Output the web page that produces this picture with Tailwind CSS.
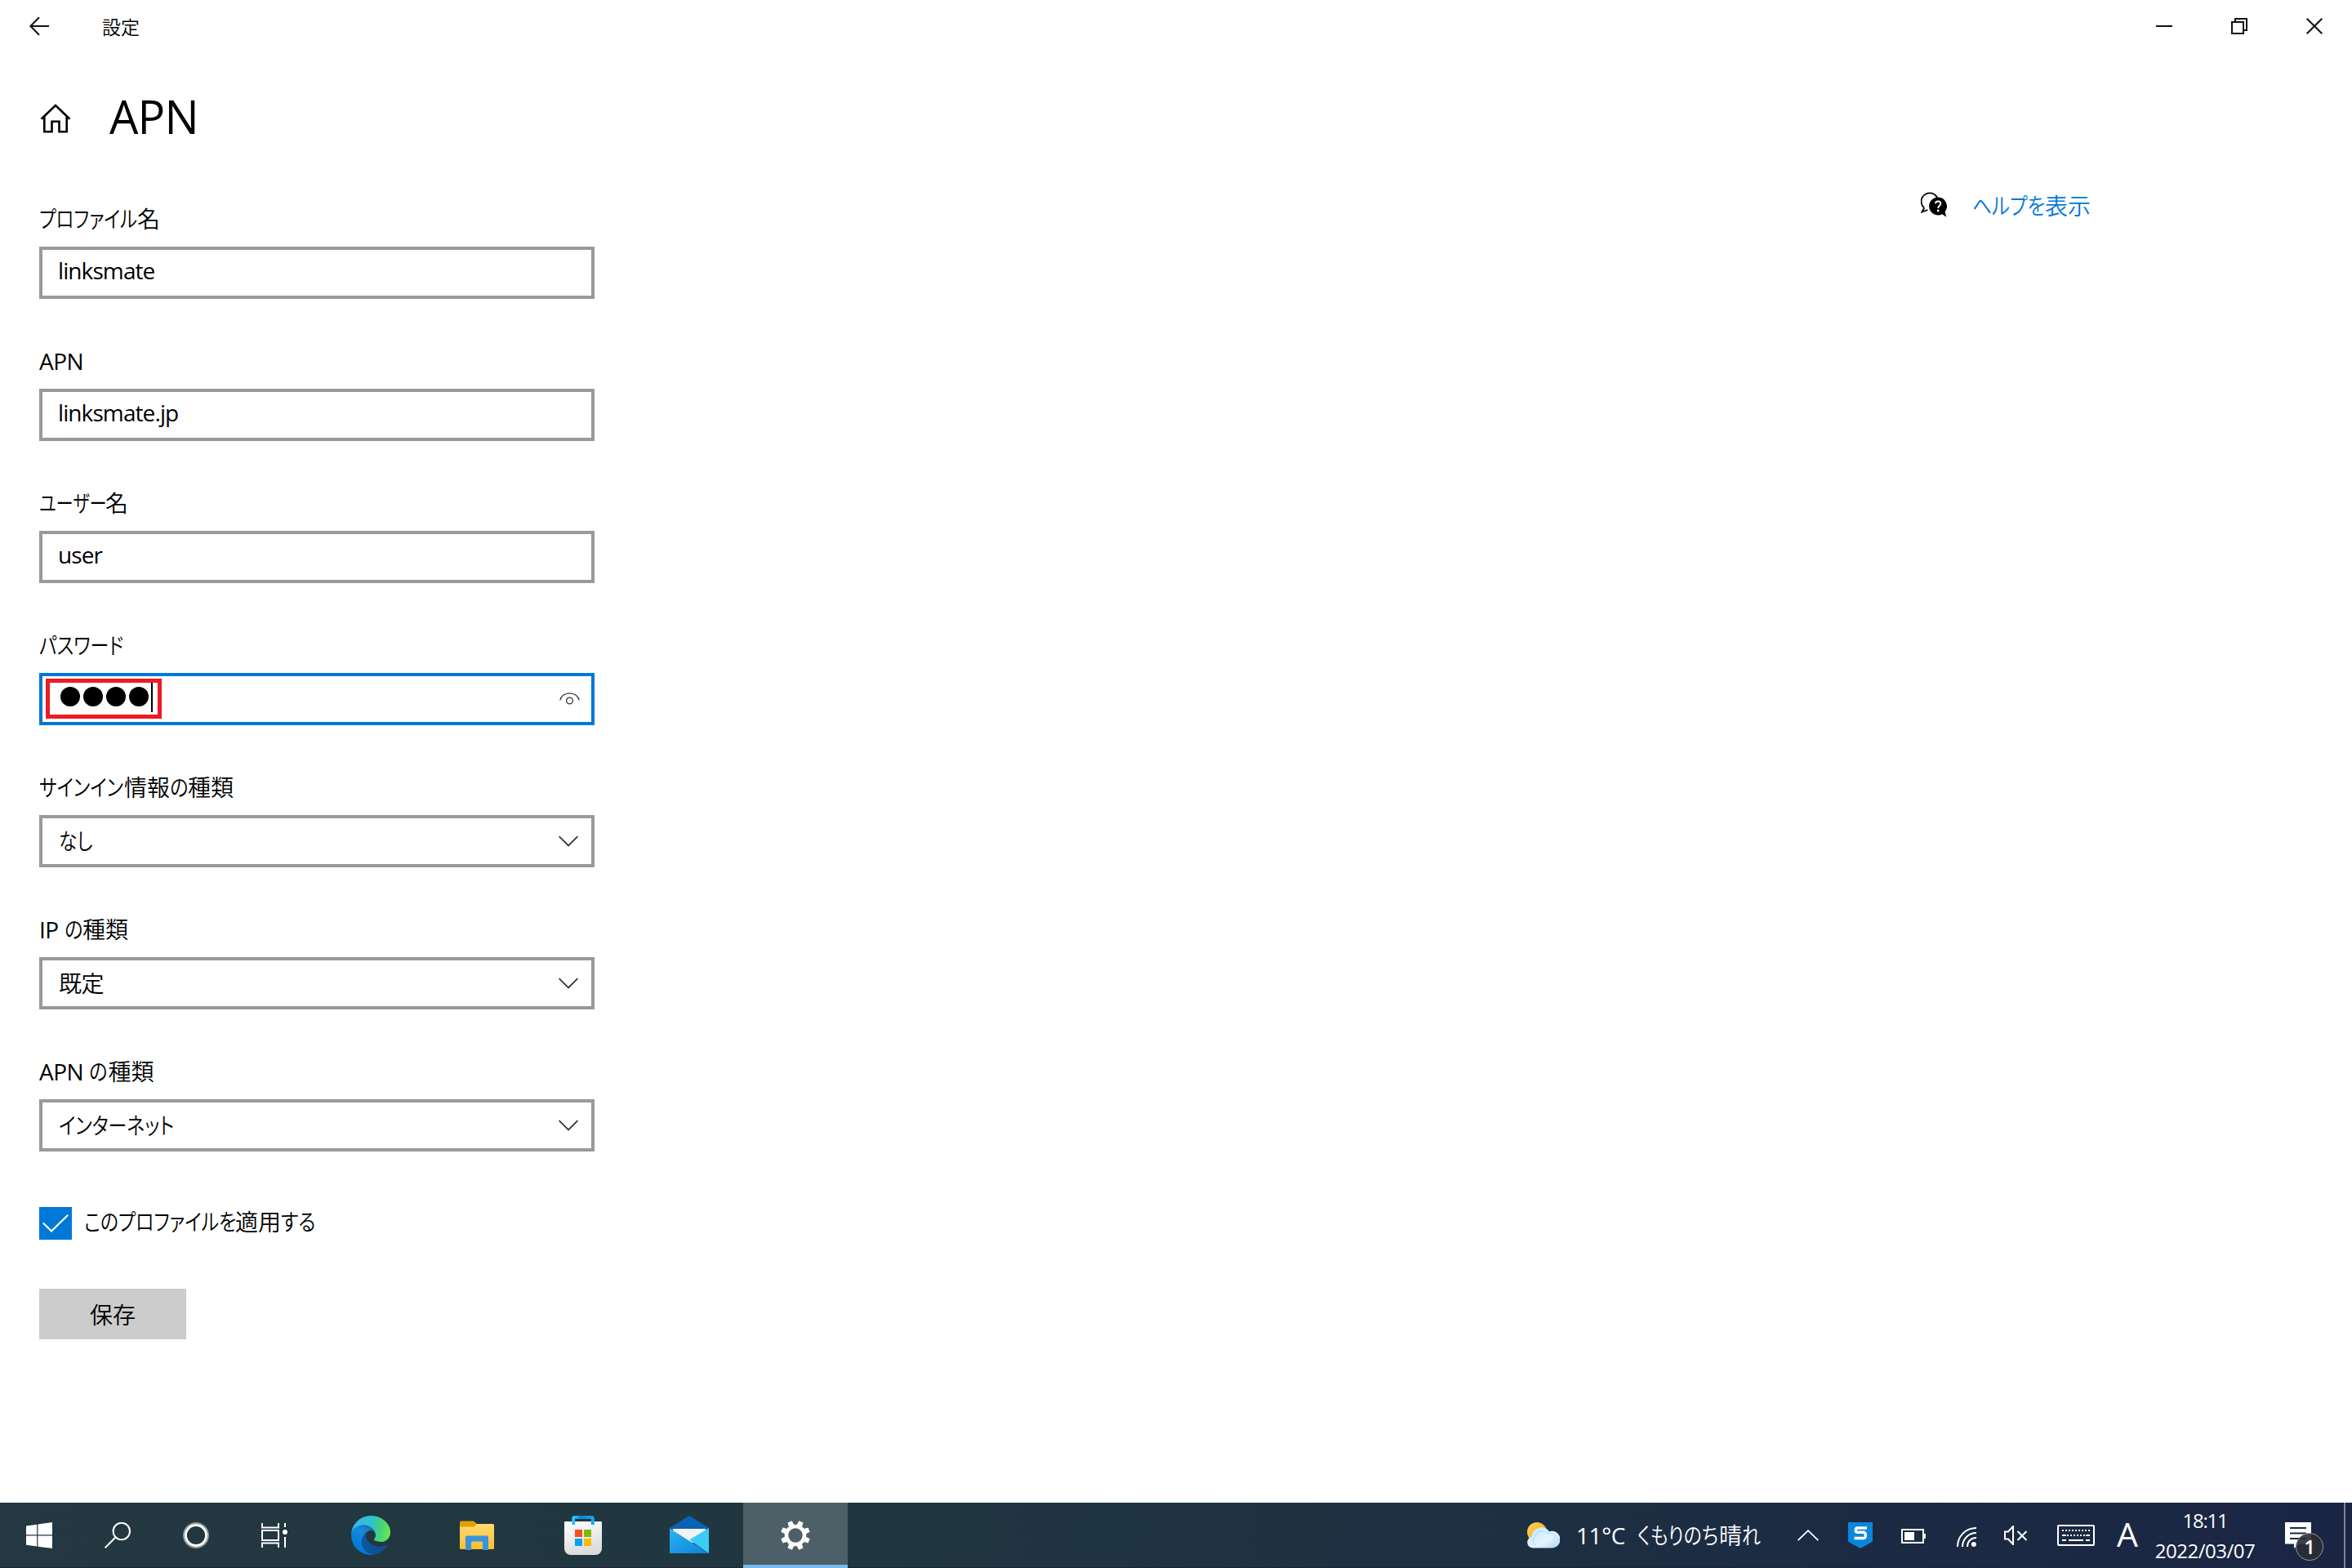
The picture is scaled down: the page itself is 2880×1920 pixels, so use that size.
<!DOCTYPE html>
<html lang="ja">
<head>
  <meta charset="UTF-8" />
  <meta name="viewport" content="width=device-width, initial-scale=1.0" />
  <title>設定</title>
  <script src="https://cdn.jsdelivr.net/npm/@tailwindcss/browser@4"></script>
</head>
<body class="w-[2880px] h-[1920px] overflow-hidden flex flex-col bg-white text-black font-['Open_Sans','Noto_Sans_CJK_JP',sans-serif] text-[28px] leading-[40px] whitespace-nowrap">

<!-- Title bar -->
<header class="h-16 flex items-center shrink-0">
  <button class="w-24 h-16 flex items-center justify-center">
    <svg class="w-6 h-6" viewBox="0 0 24 24" fill="none" stroke="#111" stroke-width="2"><path d="M24 12H1.5M12 1.2 1.4 12 12 22.8"/></svg>
  </button>
  <span class="ml-[29px] mt-0.5 text-[23px] font-[350]">設定</span>
  <div class="ml-auto flex">
    <button class="w-[92px] h-16 flex items-center justify-center">
      <svg class="w-5 h-5" viewBox="0 0 20 20"><path d="M0 9h20v2H0z" fill="#111"/></svg>
    </button>
    <button class="w-[92px] h-16 flex items-center justify-center">
      <svg class="w-5 h-5" viewBox="0 0 20 20" fill="none" stroke="#111" stroke-width="2"><path d="M1 5h14v14H1zM5 5V1h14v14h-4"/></svg>
    </button>
    <button class="w-[92px] h-16 flex items-center justify-center">
      <svg class="w-5 h-5" viewBox="0 0 20 20" fill="none" stroke="#111" stroke-width="2"><path d="m.7.7 18.6 18.6M19.300.7.7 19.3"/></svg>
    </button>
  </div>
</header>

<main class="flex-1 flex">
  <div class="w-[2352px] pl-12">
    <div class="h-[184px] flex items-start pt-[43px]">
      <svg class="w-10 h-9 mt-5" viewBox="0 0 40 36" fill="none" stroke="#000" stroke-width="2.6"><path d="M2.600 18.800 20 2l17.400 16.800M6.300 16v18.300h9.200V21.700h9v12.600h9.200V16"/></svg>
      <h1 class="ml-[46px] text-[56px] leading-[70px] font-[380] tracking-[-0.8px]">APN</h1>
    </div>

    <form class="w-[680px]">
      <div class="mb-14">
        <label class="block h-10 mb-[14px] font-[350]"><span class="inline-block w-[120px] origin-left scale-x-80 [font-feature-settings:'palt']">プロファイル</span>名</label>
        <div class="h-16 border-4 border-[#999] px-[19px] pt-[5px] tracking-[-0.9px]">linksmate</div>
      </div>
      <div class="mb-14">
        <label class="block h-10 mb-[14px] tracking-[-0.5px]">APN</label>
        <div class="h-16 border-4 border-[#999] px-[19px] pt-[5px] tracking-[-0.9px]">linksmate.jp</div>
      </div>
      <div class="mb-14">
        <label class="block h-10 mb-[14px] font-[350]"><span class="inline-block w-[81px] origin-left scale-x-76 [font-feature-settings:'palt']">ユーザー</span>名</label>
        <div class="h-16 border-4 border-[#999] px-[19px] pt-[5px] tracking-[-0.9px]">user</div>
      </div>
      <div class="mb-14">
        <label class="block h-10 mb-[14px] font-[350]"><span class="inline-block w-[101px] origin-left scale-x-82 [font-feature-settings:'palt']">パスワード</span></label>
        <div class="relative h-16 border-4 border-[#0078d7] flex items-start justify-between pl-[22px] pr-[14px] pt-2">
          <div class="flex items-center gap-1 h-9">
            <span class="w-6 h-6 rounded-full bg-black -mt-0.5"></span>
            <span class="w-6 h-6 rounded-full bg-black -mt-0.5"></span>
            <span class="w-6 h-6 rounded-full bg-black -mt-0.5"></span>
            <span class="w-6 h-6 rounded-full bg-black -mt-0.5"></span>
            <span class="w-0.5 h-9 bg-black -ml-px"></span>
          </div>
          <svg class="w-[25px] h-4 mt-[11px]" viewBox="0 0 25 16" fill="none" stroke="#333" stroke-width="1.3"><path d="M.8 10.500A11.800 10 0 0 1 24.200 10.500"/><circle cx="12.5" cy="11" r="3.9"/></svg>
          <!-- highlight frame -->
          <div class="absolute left-1 top-[3px] w-[142px] h-[49px] border-5 border-[#ed1c24]"></div>
        </div>
      </div>
      <div class="mb-14">
        <label class="block h-10 mb-[14px] font-[350]"><span class="inline-block w-[104px] origin-left scale-x-[.82] [font-feature-settings:'palt']">サインイン</span>情報<span class="inline-block w-[22px] origin-left scale-x-[.83] [font-feature-settings:'palt']">の</span>種類</label>
        <div class="h-16 border-4 border-[#999] pl-5 pr-4 flex items-center justify-between font-[350]">
          <span class="inline-block w-[42px] origin-left scale-x-[.81] [font-feature-settings:'palt']">なし</span>
          <svg class="w-6 h-3.5" viewBox="0 0 24 14" fill="none" stroke="#333" stroke-width="1.8"><path d="m.6 1.200 11.400 11.300L23.400 1.200"/></svg>
        </div>
      </div>
      <div class="mb-14">
        <label class="block h-10 mb-[14px] font-[350]"><span class="font-normal tracking-[-0.5px]">IP</span> <span class="inline-block w-[22px] origin-left scale-x-[.83] [font-feature-settings:'palt']">の</span>種類</label>
        <div class="h-16 border-4 border-[#999] pl-5 pr-4 flex items-center justify-between font-[350]">
          <span class="tracking-[-0.5px]">既定</span>
          <svg class="w-6 h-3.5" viewBox="0 0 24 14" fill="none" stroke="#333" stroke-width="1.8"><path d="m.6 1.200 11.400 11.300L23.400 1.200"/></svg>
        </div>
      </div>
      <div class="mb-14">
        <label class="block h-10 mb-[14px] font-[350]"><span class="font-normal tracking-[-0.5px]">APN</span> <span class="inline-block w-[23px] origin-left scale-x-[.83] [font-feature-settings:'palt']">の</span>種類</label>
        <div class="h-16 border-4 border-[#999] pl-5 pr-4 flex items-center justify-between font-[350]">
          <span class="inline-block w-[140px] origin-left scale-x-[.82] [font-feature-settings:'palt']">インターネット</span>
          <svg class="w-6 h-3.5" viewBox="0 0 24 14" fill="none" stroke="#333" stroke-width="1.8"><path d="m.6 1.200 11.400 11.300L23.400 1.200"/></svg>
        </div>
      </div>
      <div class="mt-[68px] h-10 flex items-center">
        <span class="w-10 h-10 bg-[#0078d7] flex items-center justify-center">
          <svg class="w-8 h-[22px]" viewBox="0 0 32 22" fill="none" stroke="#fff" stroke-width="2.2"><path d="M.8 10.500 11 20.500 31.200.8"/></svg>
        </span>
        <span class="ml-[15px] -mt-1 font-[350]"><span class="inline-block w-[185px] origin-left scale-x-[.82] [font-feature-settings:'palt']">このプロファイルを</span>適用<span class="inline-block w-[43px] origin-left scale-x-[.84] [font-feature-settings:'palt']">する</span></span>
      </div>
      <button type="button" class="block mt-[60px] w-[180px] h-[62px] bg-[#ccc] font-[350] pt-0.5">保存</button>
    </form>
  </div>

  <!-- Help link -->
  <a class="h-10 mt-[167px] flex items-center text-[#0078d7] font-[350]">
    <svg class="w-8 h-8" viewBox="0 0 32 32">
      <path d="M4.200 19.500A10.300 10.300 0 1 1 20.300 7.500M4.200 19.500 1.400 24.600l7-2.600" fill="none" stroke="#000" stroke-width="1.8"/>
      <path d="M21 6.500a11 11 0 1 0 5.300 20.700l5 3.500-1.700-6.500A11 11 0 0 0 21 6.500z" fill="#000"/>
      <path d="M18 14.300c.3-4 6.600-3.600 6.300.2-.2 2.400-3.100 2.400-3.100 5.500" fill="none" stroke="#fff" stroke-width="2"/>
      <circle cx="21.2" cy="23" r="1.4" fill="#fff"/>
    </svg>
    <span class="ml-[31px] mt-0.5"><span class="inline-block w-[89px] origin-left scale-x-[.84] [font-feature-settings:'palt']">ヘルプを</span>表示</span>
  </a>
</main>

<!-- Taskbar -->
<footer class="h-20 shrink-0 flex items-center border-b border-[#20233a] bg-linear-to-r from-[#233840] via-[#203640] to-[#1a2544] from-0% via-38% to-100% text-white">
  <div class="w-24 flex justify-center">
    <svg class="w-8 h-8" viewBox="0 0 32 32" fill="#fff"><path d="M0 4.500 13.200 2.700v12.600H0zM14.400 2.500 32 0v15.300H14.400zM0 16.500h13.200v13L0 27.700zM14.400 16.500H32V32l-17.600-2.300z"/></svg>
  </div>
  <div class="w-24 flex justify-center">
    <svg class="w-8 h-8" viewBox="0 0 32 32" fill="none" stroke="#fff" stroke-width="2"><circle cx="20.8" cy="11" r="10.2"/><path d="M13.600 18.200.7 31.300"/></svg>
  </div>
  <div class="w-24 flex justify-center">
    <svg class="w-8 h-8" viewBox="0 0 32 32" fill="none"><circle cx="16" cy="16" r="15" stroke="#fff" stroke-opacity=".5" stroke-width="2"/><circle cx="16" cy="16" r="12.6" stroke="#fff" stroke-width="3"/></svg>
  </div>
  <div class="w-24 flex justify-center">
    <svg class="w-8 h-8" viewBox="0 0 32 32" fill="none" stroke="#fff" stroke-width="2"><path d="M1 1v5.500h20V1M1 31v-5.500h20V31M1 10h20v12H1zM29 1v5M29 18v13"/><circle cx="29" cy="12" r="3" fill="#fff" stroke="none"/></svg>
  </div>
  <div class="ml-[5px] w-[130px] flex justify-center">
    <svg class="w-12 h-12" viewBox="0 0 256 256">
      <defs>
        <linearGradient id="edgeDark" x1="60" y1="180" x2="236" y2="180" gradientUnits="userSpaceOnUse"><stop offset="0" stop-color="#0c59a4"/><stop offset="1" stop-color="#114a8b"/></linearGradient>
        <linearGradient id="edgeMid" x1="150" y1="90" x2="45" y2="220" gradientUnits="userSpaceOnUse"><stop offset="0" stop-color="#1b6fb8"/><stop offset=".4" stop-color="#148bdc"/><stop offset="1" stop-color="#0078d7"/></linearGradient>
        <linearGradient id="edgeLight" x1="10" y1="70" x2="250" y2="120" gradientUnits="userSpaceOnUse"><stop offset="0" stop-color="#35b8f1"/><stop offset=".45" stop-color="#2cc2cf"/><stop offset=".75" stop-color="#45d37c"/><stop offset="1" stop-color="#66eb4c"/></linearGradient>
      </defs>
      <path fill="url(#edgeDark)" d="M231 190.500c-3.400 1.800-6.900 3.400-10.500 4.700a101.500 101.500 0 0 1-35.900 6.500c-47.300 0-88.500-32.500-88.500-74.300a31.500 31.500 0 0 1 16.400-27.300c-42.800 1.800-53.800 46.400-53.800 72.500 0 74 68.100 81.400 82.800 81.400 7.900 0 19.800-2.300 27-4.600l1.300-.4a128.300 128.300 0 0 0 66.600-52.800 4 4 0 0 0-5.400-5.700z"/>
      <path fill="url(#edgeMid)" d="M105.700 241.400a79.200 79.200 0 0 1-22.700-21.300 80.700 80.700 0 0 1 29.500-120c3.200-1.500 8.500-4.100 15.600-4a32.400 32.400 0 0 1 25.700 13 31.900 31.900 0 0 1 6.300 18.700c0-.2 24.500-79.600-80-79.600-43.900 0-80 41.600-80 78.200a130.200 130.200 0 0 0 12.100 56 128 128 0 0 0 156.400 67 75.500 75.500 0 0 1-62.800-8z"/>
      <path fill="url(#edgeLight)" d="M152.300 148.900c-.9 1-3.400 2.500-3.400 5.600 0 2.600 1.700 5.200 4.800 7.300 14.400 10.100 41.700 8.700 41.800 8.700a59.600 59.600 0 0 0 30.300-8.300 61.400 61.400 0 0 0 30.400-52.900c.3-22.400-8-37.300-11.300-43.900C223.500 23.900 177.700 0 128 0A128 128 0 0 0 0 126.200c.5-36.500 36.800-66 80-66 3.500 0 23.500.3 42 10a72.600 72.600 0 0 1 30.900 29.300c6.100 10.600 7.200 24.100 7.200 29.500s-2.700 13.300-7.800 19.900z"/>
    </svg>
  </div>
  <div class="w-[130px] flex justify-center">
    <svg class="w-[42px] h-9" viewBox="0 0 42 36">
      <defs><linearGradient id="folder" x1="0" y1="0" x2="0" y2="1"><stop offset="0" stop-color="#ffda70"/><stop offset="1" stop-color="#f9c02f"/></linearGradient></defs>
      <path d="M0 2a1.500 1.500 0 0 1 1.500-1.500H16a3 3 0 0 1 2 .8L21 4v6H0z" fill="#e09f06"/>
      <path d="M0 7.500h16.500c1 0 1.500-.3 2.200-1L20.500 4H40.500A1.500 1.500 0 0 1 42 5.500v28a1.500 1.500 0 0 1-1.500 1.500h-39A1.500 1.500 0 0 1 0 33.500z" fill="url(#folder)"/>
      <path d="M7 36V20.500a2 2 0 0 1 2-2h24a2 2 0 0 1 2 2V36h-7V27a1.500 1.500 0 0 0-1.500-1.500h-11A1.500 1.500 0 0 0 14 27v9z" fill="#3b93dc"/>
    </svg>
  </div>
  <div class="w-[130px] flex justify-center">
    <svg class="w-[46px] h-12" viewBox="0 0 46 48">
      <defs>
        <linearGradient id="bag" x1="0" y1="0" x2=".3" y2="1"><stop offset="0" stop-color="#fff"/><stop offset="1" stop-color="#dcdcdc"/></linearGradient>
        <linearGradient id="handle" x1="0" y1="0" x2="1" y2="0"><stop offset="0" stop-color="#30c8f8"/><stop offset=".4" stop-color="#0a84d8"/><stop offset="1" stop-color="#1aa8ee"/></linearGradient>
      </defs>
      <path d="M1 7h44a1 1 0 0 1 1 1v32a8 8 0 0 1-8 8H8a8 8 0 0 1-8-8V8a1 1 0 0 1 1-1z" fill="url(#bag)"/>
      <path d="M11.200 11V3.500A1.500 1.500 0 0 1 12.700 2h20.600a1.500 1.500 0 0 1 1.500 1.500V11" fill="none" stroke="url(#handle)" stroke-width="4"/>
      <path d="M13 17h9v9h-9z" fill="#f25022"/><path d="M24 17h9v9h-9z" fill="#7fba00"/>
      <path d="M13 28h9v9h-9z" fill="#00a4ef"/><path d="M24 28h9v9h-9z" fill="#ffb900"/>
    </svg>
  </div>
  <div class="w-[130px] flex justify-center">
    <svg class="w-12 h-[46px] -mt-0.5" viewBox="0 0 48 46">
      <defs><linearGradient id="mail" x1="0" y1="0" x2="1" y2="1"><stop offset="0" stop-color="#2eb4f0"/><stop offset="1" stop-color="#0a80da"/></linearGradient></defs>
      <path d="M0 15 22.500.8a3 3 0 0 1 3 0L48 15v3H0z" fill="#0763b5"/>
      <path d="M4 16h40v6L24 36 4 22z" fill="#f2f2f2"/>
      <path d="M48 15v31L24 29.500z" fill="#3accf6"/>
      <path d="M0 15.500 48 46H0z" fill="url(#mail)"/>
    </svg>
  </div>
  <div class="ml-px w-32 h-20 -mb-px border-b-4 border-[#76b9ed] bg-[#4d5f67] flex items-center justify-center">
    <svg class="w-9 h-9 mt-1" viewBox="-18 -18 36 36">
      <g fill="#fff" transform="rotate(22.5)">
        <path id="tooth" d="M-3.500-11.500-2.800-18H2.800L3.500-11.500z"/>
        <use href="#tooth" transform="rotate(45)"/>
        <use href="#tooth" transform="rotate(90)"/>
        <use href="#tooth" transform="rotate(135)"/>
        <use href="#tooth" transform="rotate(180)"/>
        <use href="#tooth" transform="rotate(225)"/>
        <use href="#tooth" transform="rotate(270)"/>
        <use href="#tooth" transform="rotate(315)"/>
      </g>
      <circle r="11" fill="none" stroke="#fff" stroke-width="4.6"/>
    </svg>
  </div>

  <!-- Tray -->
  <div class="ml-auto h-full flex items-center">
    <svg class="w-10 h-8" viewBox="0 0 40 32">
      <defs>
        <linearGradient id="sun" x1="0" y1="0" x2="1" y2="1"><stop offset="0" stop-color="#ffd65c"/><stop offset="1" stop-color="#f59b14"/></linearGradient>
        <linearGradient id="cloud" x1="0" y1="0" x2="1" y2="1"><stop offset="0" stop-color="#c4e6fb"/><stop offset=".6" stop-color="#e4f4fe"/><stop offset="1" stop-color="#a6d4f2"/></linearGradient>
      </defs>
      <circle cx="12" cy="12" r="12" fill="url(#sun)"/>
      <path d="M7 31.500a7 7 0 0 1-1.500-13.800A12 12 0 0 1 27 11.200 10.400 10.400 0 1 1 30 31.500z" fill="url(#cloud)"/>
      <path d="M10 28a6 6 0 0 1-1-9.500A9.500 9.500 0 0 1 25 13.500 8 8 0 0 1 35 19" fill="none" stroke="#a8dcff" stroke-opacity=".6" stroke-width="2"/>
    </svg>
    <span class="ml-5 w-[75px] tracking-[-0.4px]">11°C</span>
    <span class="w-[155px] font-[350]"><span class="inline-block w-[100px] origin-left scale-x-[.82] [font-feature-settings:'palt']">くもりのち</span>晴<span class="inline-block origin-left scale-x-[.82]">れ</span></span>
    <svg class="ml-[41px] w-[26px] h-3.5" viewBox="0 0 26 14" fill="none" stroke="#fff" stroke-width="1.8"><path d="m.6 13.200 12.400-12 12.400 12"/></svg>
    <svg class="ml-9 w-[30px] h-8" viewBox="0 0 30 32">
      <path d="M0 0h30v22.500a2 2 0 0 1-1 1.700L16.500 31.300a3 3 0 0 1-3 0L1 24.200a2 2 0 0 1-1-1.700z" fill="#0a86dc"/>
      <path d="M23 7H11.500A2.200 2.200 0 0 0 9.300 9.200v.9a2.200 2.200 0 0 0 2.200 2.200H19a2.200 2.200 0 0 1 2.200 2.200v2.300A2.200 2.200 0 0 1 19 19.500H7.500" fill="none" stroke="#fff" stroke-width="3.4"/>
    </svg>
    <svg class="ml-[35px] w-[30px] h-[18px] mt-0.5" viewBox="0 0 30 18" fill="#fff"><path d="M0 0h28v6h2v6h-2v6H0zM2 2v14h24V2z" fill-rule="evenodd"/><path d="M4 4h12v10H4z"/></svg>
    <svg class="ml-[38px] w-6 h-6 mt-1" viewBox="0 0 24 24" fill="none" stroke="#fff" stroke-width="2"><path d="M1 24C1 11 11 1 24 1M7 24C7 14.500 14.500 7 24 7M13 24c0-6.500 4.500-11 11-11"/><circle cx="20.8" cy="21" r="3" fill="#fff" stroke="none"/></svg>
    <svg class="ml-[34px] w-7 h-6" viewBox="0 0 28 24" fill="none" stroke="#fff" stroke-width="2"><path d="M1 7.500h4L11 1v22l-6-6.500H1zM16.500 7l11 11M27.500 7l-11 11"/></svg>
    <svg class="ml-[37px] w-[46px] h-[26px]" viewBox="0 0 46 26" fill="none" stroke="#fff" stroke-width="2"><rect x="1" y="1" width="44" height="24" rx="1"/><path d="M6 7h34M12 13h22" stroke-dasharray="2 2"/><path d="M6 13h5M35 13h5M6 19h5M14 19h18M35 19h5"/></svg>
    <span class="ml-[27px] w-6 font-[370] text-[41px] -mt-1">A</span>
    <div class="ml-[21px] w-[126px] text-center text-[24px] leading-[37px]">
      <div class="tracking-[-1.2px]">18:11</div>
      <div class="tracking-[-0.5px]">2022/03/07</div>
    </div>
    <div class="relative ml-[35px] w-8 h-8">
      <svg class="w-8 h-8" viewBox="0 0 32 32"><path d="M0 0h32v26.500H17l-6 5.500v-5.500H0z" fill="#fff"/><path d="M6 7h20M6 13.500h20M6 20h20" stroke="#1c2a42" stroke-width="2"/></svg>
      <div class="absolute left-[13px] top-[13px] w-[34px] h-[34px] rounded-full bg-[#2b2d33]/90 border border-[#9a9a9a] text-[24px] leading-[32px] font-semibold text-center">1</div>
    </div>
    <div class="ml-10 w-[10px] h-20 border-l-2 border-[#7b8496]"></div>
  </div>
</footer>
</body>
</html>
